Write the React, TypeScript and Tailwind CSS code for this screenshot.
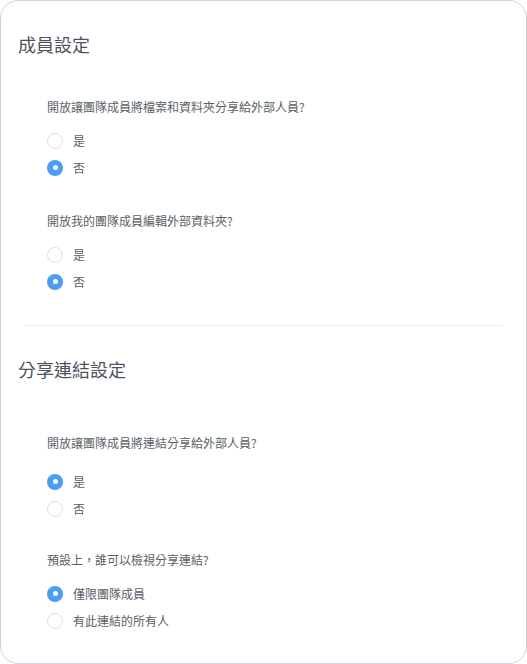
import { useState } from 'react';

type Option = { value: string; label: string };

const font = { fontFamily: '"Noto Sans CJK TC", "Noto Sans", sans-serif' };

function RadioRows({ options, initial }: { options: Option[]; initial: string }) {
  const [value, setValue] = useState(initial);
  return (
    <>
      {options.map((o) => {
        const checked = o.value === value;
        return (
          <label key={o.value} className="flex h-[27px] cursor-pointer items-center gap-[10px]" onClick={() => setValue(o.value)}>
            {checked ? (
              <span className="flex size-4 items-center justify-center rounded-full bg-[#4a9ff5]">
                <span className="size-[5px] rounded-full bg-white" />
              </span>
            ) : (
              <span className="size-4 rounded-full border border-[#dcdfe3] bg-white" />
            )}
            <span className="text-[12px] leading-[20px] text-[#595f67]">{o.label}</span>
          </label>
        );
      })}
    </>
  );
}

function Question({ text, options, initial, className = '', gap = 'mt-[10px]' }: { text: string; options: Option[]; initial: string; className?: string; gap?: string }) {
  return (
    <div className={className}>
      <p className="text-[12px] leading-[20px] text-[#595f67]">{text}</p>
      <div className={gap}>
        <RadioRows options={options} initial={initial} />
      </div>
    </div>
  );
}

const yesNo = [
  { value: 'yes', label: '是' },
  { value: 'no', label: '否' },
];

export default function App() {
  return (
    <div className="h-[664px] w-[527px] bg-white" style={font}>
      <div className="h-full rounded-[18px] border border-[#cfd4db] bg-white">
        {/* Member settings */}
        <section className="px-[17px] pt-[30px]">
          <h2 className="text-[18px] leading-[26px] text-[#4d535c]">成員設定</h2>
          <div className="mt-[40px] pl-[29px]">
            <Question text="開放讓團隊成員將檔案和資料夾分享給外部人員?" options={yesNo} initial="no" />
            <Question className="mt-[30px]" text="開放我的團隊成員編輯外部資料夾?" options={yesNo} initial="no" />
          </div>
        </section>

        <div className="mx-[23px] mt-[30px] border-t border-[#e8ebef]" />

        {/* Share link settings */}
        <section className="px-[17px] pt-[30px]">
          <h2 className="text-[18px] leading-[26px] text-[#4d535c]">分享連結設定</h2>
          <div className="mt-[51px] pl-[29px]">
            <Question gap="mt-[15px]" text="開放讓團隊成員將連結分享給外部人員?" options={yesNo} initial="yes" />
            <Question
              className="mt-[28px]"
              text="預設上，誰可以檢視分享連結?"
              options={[
                { value: 'team', label: '僅限團隊成員' },
                { value: 'anyone', label: '有此連結的所有人' },
              ]}
              initial="team"
            />
          </div>
        </section>
      </div>
    </div>
  );
}
